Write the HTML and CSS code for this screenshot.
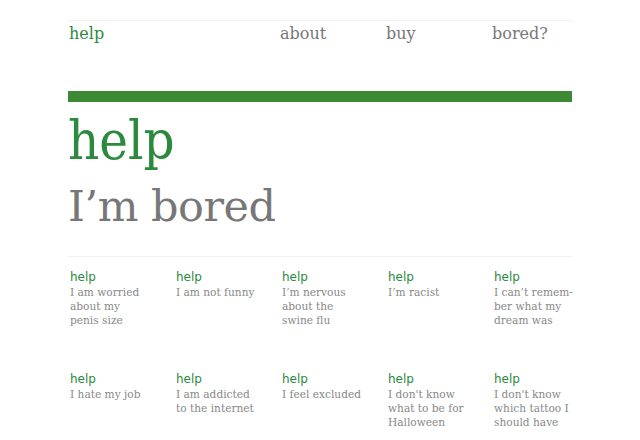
FILE: index.html
```html
<!DOCTYPE html>
<html>
<head>
<meta charset="utf-8">
<link rel="stylesheet" href="styles.css">
</head>
<body>
<div class="page">
  <nav class="nav">
    <a class="nav-home">help</a>
    <span></span>
    <a class="nav-link">about</a>
    <a class="nav-link">buy</a>
    <a class="nav-link">bored?</a>
  </nav>
  <div class="bar"></div>
  <h1 class="title">help</h1>
  <h2 class="subtitle">I’m bored</h2>
  <div class="grid">
    <div class="card"><div class="label">help</div><div class="text">I am worried about my penis size</div></div>
    <div class="card"><div class="label">help</div><div class="text">I am not funny</div></div>
    <div class="card"><div class="label">help</div><div class="text">I’m nervous about the swine flu</div></div>
    <div class="card"><div class="label">help</div><div class="text">I’m racist</div></div>
    <div class="card"><div class="label">help</div><div class="text">I can’t remem-<br>ber what my dream was</div></div>
    <div class="card"><div class="label">help</div><div class="text">I hate my job</div></div>
    <div class="card"><div class="label">help</div><div class="text">I am addicted to the internet</div></div>
    <div class="card"><div class="label">help</div><div class="text">I feel excluded</div></div>
    <div class="card"><div class="label">help</div><div class="text">I don't know what to be for Halloween</div></div>
    <div class="card"><div class="label">help</div><div class="text">I don't know which tattoo I should have</div></div>
  </div>
</div>
</body>
</html>
```

FILE: styles.css
```css
html, body {
  margin: 0;
  padding: 0;
  background: #ffffff;
}
.page {
  width: 504px;
  margin-left: 68px;
  padding-top: 20px;
  font-family: "DejaVu Serif", serif;
}
.nav {
  display: grid;
  grid-template-columns: repeat(5, 106px);
  border-top: 1px solid #f0f0f0;
  height: 68px;
  padding-top: 2px;
  font-size: 16px;
  line-height: 22px;
}
.nav-home {
  color: #2b8a3e;
  padding-left: 1px;
}
.nav-link {
  color: #777777;
}
.bar {
  height: 11px;
  background: #3c8a33;
}
.title {
  margin: 9px 0 0 0;
  font-family: "DejaVu Serif", serif;
  font-stretch: condensed;
  font-weight: normal;
  font-size: 54px;
  line-height: 60px;
  letter-spacing: 0;
  color: #2b8a3e;
}
.subtitle {
  margin: 0;
  padding-top: 7px;
  font-weight: normal;
  font-size: 43px;
  line-height: 56px;
  color: #777777;
  border-bottom: 1px solid #f0f0f0;
  padding-bottom: 22px;
  letter-spacing: -0.5px;
}
.grid {
  display: grid;
  grid-template-columns: repeat(5, 106px);
  grid-auto-rows: 102px;
  padding-top: 12px;
  padding-left: 2px;
}
.card {
  width: 80px;
}
.label {
  font-family: "DejaVu Sans", sans-serif;
  font-size: 12px;
  line-height: 16px;
  color: #2b8a3e;
}
.text {
  font-size: 10.6px;
  line-height: 14px;
  color: #888888;
}
```
